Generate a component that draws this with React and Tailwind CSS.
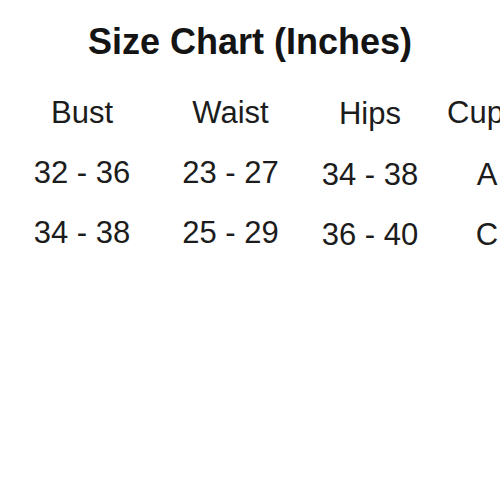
const columns = [
  { label: 'Bust', values: ['32 - 36', '34 - 38'], width: 'w-[130px]', shift: '', valueShift: '' },
  { label: 'Waist', values: ['23 - 27', '25 - 29'], width: 'w-[167px]', shift: '', valueShift: '' },
  { label: 'Hips', values: ['34 - 38', '36 - 40'], width: 'w-[112px]', shift: 'pt-[1px]', valueShift: 'pt-[2px]' },
  { label: 'Cup', values: ['A', 'C'], width: 'w-[99px]', shift: '', valueShift: 'pt-[2px] pl-[23px]' },
];

export default function App() {
  return (
    <div
      className="h-[500px] w-[500px] overflow-hidden bg-white text-[#1c1c1c]"
      style={{ fontFamily: '"Liberation Sans", Arial, sans-serif' }}
    >
      <h1 className="pt-[24px] text-center text-[36px] font-bold leading-[36px] text-[#141414]">
        Size Chart (Inches)
      </h1>

      <div className="mt-[23px] flex pl-[17px]">
        {columns.map((col) => (
          <div key={col.label} className={`${col.width} shrink-0 text-[31px] leading-[60px]`}>
            <div className={`h-[60px] whitespace-nowrap text-center ${col.shift}`}>{col.label}</div>
            {col.values.map((v) => (
              <div key={v} className={`h-[60px] whitespace-nowrap text-center ${col.valueShift}`}>
                {v}
              </div>
            ))}
          </div>
        ))}
      </div>
    </div>
  );
}
